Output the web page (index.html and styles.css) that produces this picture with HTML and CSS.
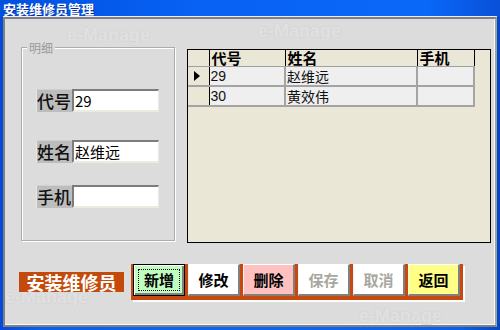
FILE: index.html
```html
<!DOCTYPE html>
<html lang="zh">
<head>
<meta charset="utf-8">
<title>安装维修员管理</title>
<link rel="stylesheet" href="styles.css">
</head>
<body>
<div class="window">
  <div class="titlebar">安装维修员管理</div>
  <div class="client">
    <span class="wm wm1">e-Manage</span>
    <span class="wm wm2">e-Manage</span>
    <span class="wm wm3">e-Manage</span>
    <span class="wm wm4">e-Manage</span>
    <div class="main">
      <div class="group">
        <span class="legend">明细</span>
        <div class="field f1"><span class="lbl">代号</span><span class="inp">29</span></div>
        <div class="field f2"><span class="lbl">姓名</span><span class="inp">赵维远</span></div>
        <div class="field f3"><span class="lbl">手机</span><span class="inp"></span></div>
      </div>
      <div class="grid">
        <table>
          <colgroup>
            <col class="c0"><col class="c1"><col class="c2"><col class="c3">
          </colgroup>
          <thead>
            <tr><th></th><th>代号</th><th>姓名</th><th>手机</th></tr>
          </thead>
          <tbody>
            <tr><td class="ind"><span class="arrow"></span></td><td class="num">29</td><td>赵维远</td><td></td></tr>
            <tr><td class="ind"></td><td class="num">30</td><td>黄效伟</td><td></td></tr>
          </tbody>
        </table>
      </div>
    </div>
    <div class="bottom">
      <div class="caption">安装维修员</div>
      <div class="toolbar">
        <button class="btn btn-new"><span class="focus">新增</span></button>
        <button class="btn btn-edit">修改</button>
        <button class="btn btn-del">删除</button>
        <button class="btn btn-off">保存</button>
        <button class="btn btn-off">取消</button>
        <button class="btn btn-back">返回</button>
      </div>
    </div>
  </div>
</div>
</body>
</html>
```
FILE: styles.css
```css
html, body {
  margin: 0;
  padding: 0;
}
body {
  width: 500px;
  height: 330px;
  overflow: hidden;
  background: #0a50dc;
  font-family: "Noto Sans CJK SC", "Liberation Sans", sans-serif;
}
.window {
  width: 500px;
  height: 330px;
  display: flex;
  flex-direction: column;
  background: linear-gradient(to right, #0848d8 0%, #0860f0 8%, #0a66f6 60%, #0a60ee 92%, #0448c8 100%);
}
.titlebar {
  height: 17px;
  line-height: 17px;
  padding-left: 3px;
  color: #fff;
  font-size: 13px;
  font-weight: bold;
  background: linear-gradient(to right, #0050e0 0%, #0862f4 40%, #0a68f8 85%, #0850d8 100%);
  text-shadow: 1px 1px 0 #0030a0;
}
.client {
  position: relative;
  margin: 0 3px 3px 3px;
  height: 310px;
  box-sizing: border-box;
  background: #dcdcdc;
  border-top: 2px solid #808080;
  border-left: 2px solid #808080;
  border-right: 2px solid #a0a0a0;
  border-bottom: 2px solid #808080;
  box-shadow: 0 -1px 0 #e8f0ff, inset -1px -1px 0 #f8f8f8;
  overflow: hidden;
}
.wm {
  position: absolute;
  font-family: "Liberation Sans", sans-serif;
  font-weight: bold;
  font-size: 18px;
  line-height: 20px;
  color: #e0e0e0;
  text-shadow: 1px 0 0 #d7d7d7, -1px 0 0 #d7d7d7, 0 1px 0 #d7d7d7, 0 -1px 0 #d7d7d7;
  white-space: nowrap;
  z-index: 0;
}
.wm1 { left: 62px; top: 6px; }
.wm2 { left: 253px; top: 2px; }
.wm3 { left: 0px; top: 268px; }
.wm4 { left: 354px; top: 287px; }

.main {
  position: relative;
  z-index: 1;
  display: flex;
  align-items: flex-start;
  padding-left: 16px;
}
.group {
  position: relative;
  margin-top: 28px;
  width: 154px;
  height: 194px;
  box-sizing: border-box;
  border: 1px solid #acacac;
  box-shadow: inset 1px 1px 0 #fff, 1px 1px 0 #fff;
  background: #dcdcdc;
  padding: 41px 0 0 14px;
}
.legend {
  position: absolute;
  left: 5px;
  top: -8px;
  padding: 0 2px;
  background: #dcdcdc;
  color: #9a9a9a;
  font-size: 12px;
  line-height: 15px;
}
.field {
  display: flex;
  height: 23px;
}
.f2 { margin-top: 28px; }
.f3 { margin-top: 22px; }
.lbl {
  width: 36px;
  height: 23px;
  box-sizing: border-box;
  background: #bdbdbd;
  border-top: 1px solid #d0d0d0;
  border-left: 1px solid #e6e6e6;
  color: #111;
  font-size: 17px;
  line-height: 21px;
  font-weight: 500;
  white-space: nowrap;
  overflow: hidden;
}
.inp {
  width: 87px;
  height: 23px;
  box-sizing: border-box;
  background: #fff;
  border-top: 2px solid #7c7c7c;
  border-left: 2px solid #7c7c7c;
  border-right: 1px solid #ecebe0;
  border-bottom: 2px solid #ecebe0;
  padding-left: 1px;
  font-size: 15px;
  line-height: 19px;
  color: #000;
  white-space: nowrap;
}

.grid {
  margin-top: 30px;
  margin-left: 12px;
  width: 304px;
  height: 194px;
  box-sizing: border-box;
  background: #ebe7d7;
  border: 1px solid #000;
}
table {
  border-collapse: collapse;
  table-layout: fixed;
  width: 286px;
}
col.c0 { width: 21px; }
col.c1 { width: 76px; }
col.c2 { width: 132px; }
col.c3 { width: 57px; }
th {
  height: 16px;
  padding: 0 0 0 2px;
  text-align: left;
  font-size: 15px;
  line-height: 16px;
  font-weight: bold;
  color: #000;
  border-right: 1px solid #000;
  border-bottom: 1px solid #a0a0a0;
  white-space: nowrap;
  background: #ebe7d7;
}
td {
  height: 18px;
  padding: 0 0 0 1px;
  background: #efefef;
  border-right: 2px solid #a4a4a4;
  border-bottom: 2px solid #a4a4a4;
  font-size: 14px;
  line-height: 17px;
  color: #111;
  white-space: nowrap;
  overflow: hidden;
}
td.num {
  font-family: "Liberation Sans", sans-serif;
  font-size: 14px;
}
td.ind {
  background: #ebe7d7;
  border-right: 1px solid #000;
}
.arrow {
  display: block;
  margin-left: 5px;
  width: 0;
  height: 0;
  border-top: 5px solid transparent;
  border-bottom: 5px solid transparent;
  border-left: 6px solid #000;
}

.bottom {
  position: relative;
  z-index: 1;
  display: flex;
  align-items: center;
  margin-top: 21px;
  padding-left: 14px;
}
.caption {
  width: 105px;
  height: 20px;
  background: #c44a0c;
  color: #fff;
  font-size: 18px;
  font-weight: bold;
  line-height: 20px;
  text-align: center;
  white-space: nowrap;
}
.toolbar {
  margin-left: 7px;
  display: flex;
  gap: 3px;
  padding: 0 3px 4px 2px;
  background: #c64a10;
  box-shadow: 2px 2px 0 #fff;
}
.btn {
  width: 52px;
  height: 32px;
  box-sizing: border-box;
  padding: 0;
  margin: 0;
  background: #fff;
  border-style: solid;
  border-width: 1px 2px 2px 1px;
  border-color: #fff #808080 #808080 #f4f4f4;
  font-family: "Noto Sans CJK SC", sans-serif;
  font-size: 15px;
  font-weight: bold;
  color: #000;
  line-height: 20px;
  display: flex;
  align-items: center;
  justify-content: center;
}
.btn-new {
  background: #c0fcc0;
  border: 1px solid #000;
  box-shadow: inset 1px 1px 0 #fff, inset -2px -2px 0 #808080;
}
.focus {
  display: flex;
  align-items: center;
  justify-content: center;
  width: 42px;
  height: 22px;
  box-sizing: border-box;
  border: 1px dotted #000;
}
.btn-edit { background: #fff; }
.btn-del { background: #ffc0c0; }
.btn-off { background: #fff; color: #a8a8a0; }
.btn-back { background: #ffff88; }
```
